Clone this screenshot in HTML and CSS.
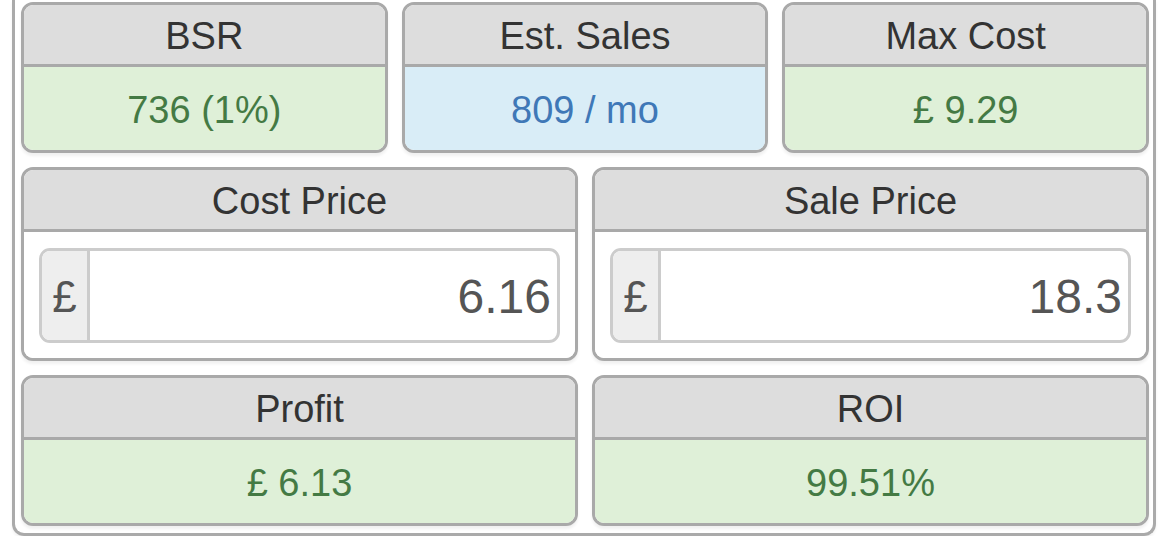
FILE: index.html
```html
<!DOCTYPE html>
<html>
<head>
<meta charset="utf-8">
<link rel="stylesheet" href="styles.css">
</head>
<body>
<div class="frame">
  <div class="row row-3">
    <div class="card">
      <div class="card-head">BSR</div>
      <div class="card-body success">736 (1%)</div>
    </div>
    <div class="card">
      <div class="card-head">Est. Sales</div>
      <div class="card-body info">809 / mo</div>
    </div>
    <div class="card">
      <div class="card-head">Max Cost</div>
      <div class="card-body success">£ 9.29</div>
    </div>
  </div>
  <div class="row row-2">
    <div class="card">
      <div class="card-head">Cost Price</div>
      <div class="card-body plain">
        <div class="input-group">
          <span class="addon">£</span>
          <span class="field">6.16</span>
        </div>
      </div>
    </div>
    <div class="card">
      <div class="card-head">Sale Price</div>
      <div class="card-body plain">
        <div class="input-group">
          <span class="addon">£</span>
          <span class="field">18.3</span>
        </div>
      </div>
    </div>
  </div>
  <div class="row row-2">
    <div class="card">
      <div class="card-head">Profit</div>
      <div class="card-body success">£ 6.13</div>
    </div>
    <div class="card">
      <div class="card-head">ROI</div>
      <div class="card-body success">99.51%</div>
    </div>
  </div>
</div>
</body>
</html>
```
FILE: styles.css
```css
* { box-sizing: border-box; }
html, body { margin: 0; padding: 0; background: #ffffff; }
body {
  font-family: "Liberation Sans", Arial, Helvetica, sans-serif;
  color: #333333;
}
.frame {
  margin: 0 14px 0 12px;
  border: 3px solid #aaaaaa;
  border-top: none;
  border-radius: 0 0 12px 12px;
  padding: 2px 4px 7px 6px;
  display: flex;
  flex-direction: column;
  gap: 14px;
  box-shadow: 0 2px 3px rgba(0,0,0,0.06);
}
.row { display: grid; gap: 14px; }
.row-3 { grid-template-columns: repeat(3, 1fr); }
.row-2 { grid-template-columns: repeat(2, 1fr); }
.card {
  border: 3px solid #a9a9a9;
  border-radius: 12px;
  overflow: hidden;
  background: #ffffff;
  box-shadow: 0 3px 3px rgba(0,0,0,0.06);
}
.card-head {
  height: 62px;
  border-bottom: 3px solid #a9a9a9;
  background: #dddddd;
  font-size: 38px;
  line-height: 63px;
  text-align: center;
  color: #333333;
  overflow: hidden;
}
.card-body {
  height: 83px;
  font-size: 38px;
  line-height: 87px;
  text-align: center;
  overflow: hidden;
}
.success { background: #dff0d8; color: #447a44; }
.info { background: #d9edf7; color: #3f78b7; }
.plain {
  height: 126px;
  padding: 16px 15px 15px 15px;
  background: #ffffff;
}
.input-group {
  display: flex;
  height: 95px;
  border: 3px solid #cccccc;
  border-radius: 11px;
  overflow: hidden;
}
.addon {
  width: 48px;
  flex: none;
  background: #eeeeee;
  border-right: 3px solid #cccccc;
  color: #555555;
  font-size: 44px;
  line-height: 91px;
  text-align: center;
}
.field {
  flex: 1;
  text-align: right;
  padding-right: 6px;
  font-size: 48px;
  line-height: 91px;
  color: #555555;
}
```
